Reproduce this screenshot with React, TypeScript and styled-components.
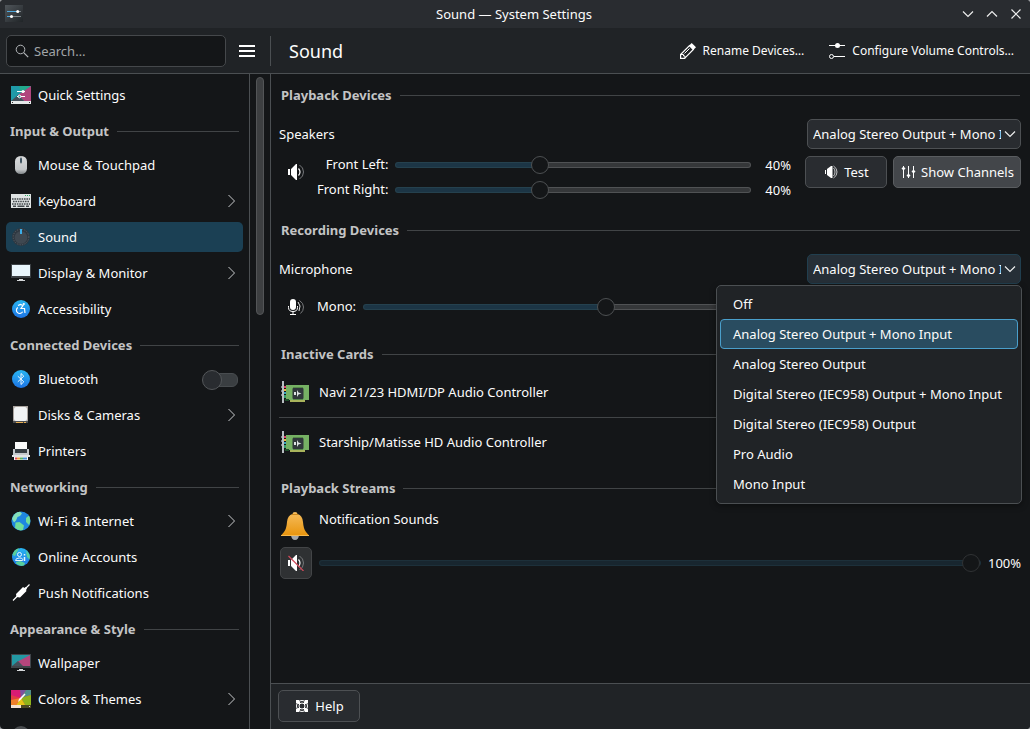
import React, { ReactNode, useState } from "react";
import styled, { createGlobalStyle, css } from "styled-components";

const c = {
  view: "#141618",
  panel: "#202326",
  title: "#292c30",
  button: "#292c30",
  line: "#414446",
  edge: "#4b4f52",
  text: "#fcfcfc",
  muted: "#c3c4c5",
};

const GlobalStyle = createGlobalStyle`
  * { box-sizing: border-box; }
  body { margin: 0; background: #9a9da0; }
  body, button, input, select {
    font-family: "Noto Sans", sans-serif;
    font-size: 13px;
    line-height: 18px;
    color: ${c.text};
  }
  svg { display: block; flex: none; }
  ul { list-style: none; margin: 0; padding: 0; }
`;

const Window = styled.div`
  display: flex;
  flex-direction: column;
  height: 100vh;
  overflow: hidden;
  border-radius: 4px;
  background: ${c.view};
`;

/* Title bar */
const TitleBar = styled.header`
  display: grid;
  grid-template-columns: 1fr auto 1fr;
  align-items: center;
  flex: none;
  height: 28px;
  padding: 0 6px 0 4px;
  background: ${c.title};
`;
const WindowTitle = styled.span``;
const WindowButtons = styled.div`
  display: flex;
  justify-content: flex-end;
  gap: 8px;
`;
const BareButton = styled.button`
  display: flex;
  align-items: center;
  justify-content: center;
  gap: 7px;
  padding: 0;
  border: 0;
  background: none;
  font-size: 12px;
  white-space: nowrap;
`;

/* Toolbar */
const ToolBar = styled.div`
  display: flex;
  align-items: center;
  flex: none;
  height: 46px;
  background: ${c.panel};
  border-bottom: 1px solid ${c.edge};
`;
const ToolBarSide = styled.div`
  display: flex;
  align-items: center;
  gap: 13px;
  flex: none;
  width: 270px;
  padding-left: 6px;
`;
const SearchBox = styled.label`
  display: flex;
  align-items: center;
  gap: 4px;
  width: 220px;
  height: 32px;
  padding: 0 7px;
  border: 1px solid #45484b;
  border-radius: 5px;
  background: ${c.view};
`;
const SearchInput = styled.input`
  flex: 1;
  min-width: 0;
  padding: 0;
  border: 0;
  outline: 0;
  background: none;
  &::placeholder { color: #a1a5a8; opacity: 1; }
`;
const ToolBarMain = styled.div`
  display: flex;
  align-items: center;
  gap: 25px;
  flex: 1;
  height: 30px;
  padding: 0 16px 0 18px;
  border-left: 1px solid ${c.edge};
`;
const PageTitle = styled.h1`
  flex: 1;
  margin: 0;
  font-size: 18px;
  line-height: 24px;
  font-weight: 400;
`;

/* Sidebar */
const Body = styled.div`
  display: flex;
  flex: 1;
  min-height: 0;
`;
const SideBar = styled.nav`
  flex: none;
  width: 250px;
  padding-top: 3px;
  overflow: hidden;
  border-right: 1px solid ${c.edge};
`;
const ScrollGutter = styled.div`
  flex: none;
  width: 20px;
  padding: 3px 6px;
`;
const ScrollThumb = styled.div`
  width: 8px;
  height: 238px;
  border: 1px solid #535557;
  border-radius: 4px;
  background: #3d3f41;
`;
const Heading = styled.h2<{ $side?: boolean }>`
  display: flex;
  align-items: center;
  gap: 8px;
  height: ${(p) => (p.$side ? 34 : 30)}px;
  margin: 0;
  padding: ${(p) => (p.$side ? "2px 10px 0" : "0 1px 0 2px")};
  font-size: 13px;
  line-height: 18px;
  font-weight: 700;
  color: ${c.muted};
  white-space: nowrap;
  &::after {
    content: "";
    flex: 1;
    height: 1px;
    background: ${c.line};
  }
`;
const SideRow = styled.li<{ $selected?: boolean }>`
  display: flex;
  align-items: center;
  height: 30px;
  margin: 3px 6px;
  padding: 0 5px;
  border-radius: 5px;
  ${(p) => p.$selected && css`background: #1b4054;`}
`;
const SideList = styled.ul`
  display: flow-root;
  ${SideRow} + ${SideRow} { margin-top: 6px; }
`;
const SideLink = styled.a`
  display: flex;
  align-items: center;
  gap: 7px;
  flex: 1;
  color: inherit;
  text-decoration: none;
`;
const Switch = styled.input`
  appearance: none;
  display: grid;
  align-items: center;
  width: 36px;
  height: 18px;
  margin: 0;
  &::before,
  &::after {
    content: "";
    grid-area: 1 / 1;
    border: 1px solid #54575a;
  }
  &::before {
    height: 12px;
    margin-left: 2px;
    border-color: #484c4f;
    border-radius: 6px;
    background: #3a3e41;
  }
  &::after {
    width: 18px;
    height: 18px;
    border-radius: 50%;
    background: #292c30;
  }
`;

/* Main page */
const Main = styled.main`
  display: flex;
  flex-direction: column;
  flex: 1;
  min-width: 0;
  border-left: 1px solid ${c.edge};
`;
const Page = styled.div`
  display: flex;
  flex-direction: column;
  gap: 7px;
  flex: 1;
  padding: 6px 9px 0 8px;
`;
const Section = styled.section``;
const DeviceHead = styled.div`
  display: flex;
  align-items: center;
  justify-content: space-between;
  margin-top: 9px;
`;
const DeviceName = styled.span``;
const DeviceBody = styled.div`
  display: flex;
  align-items: flex-start;
  padding: 7px 0 9px 1px;
`;
const IconCell = styled.span`
  display: flex;
  align-items: center;
  justify-content: center;
  flex: none;
  width: 32px;
  height: 32px;
`;
const Channels = styled.div`
  display: grid;
  grid-template-columns: auto 1fr 33px;
  align-items: center;
  align-content: center;
  gap: 7px;
  flex: 1;
  min-height: 32px;
  padding-left: 5px;
`;
const ChannelLabel = styled.label`
  padding-bottom: 2px;
  line-height: 16px;
  text-align: right;
  white-space: nowrap;
`;
const Percent = styled.output`
  width: 33px;
  text-align: right;
`;
const DeviceActions = styled.div`
  display: flex;
  gap: 6px;
  margin-left: 14px;
`;
const Button = styled.button<{ $pressed?: boolean; $width: number }>`
  display: flex;
  align-items: center;
  justify-content: center;
  gap: 5px;
  width: ${(p) => p.$width}px;
  height: 32px;
  padding: 0;
  border: 1px solid ${(p) => (p.$pressed ? "#5a5d60" : "#4d5053")};
  border-radius: 5px;
  background: ${(p) => (p.$pressed ? "#43464a" : c.button)};
  white-space: nowrap;
`;
const MuteButton = styled(Button)`
  flex: none;
  border-color: #434547;
  background: #2f3133;
`;
const Range = styled.input.attrs({ type: "range" })<{ $muted?: boolean }>`
  --fill: ${(p) => (p.$muted ? "#18262f" : "#1c3545")};
  --fill-edge: ${(p) => (p.$muted ? "#1d303a" : "#25414e")};
  appearance: none;
  flex: 1;
  width: 100%;
  min-width: 0;
  height: 18px;
  margin: 0;
  background: none;
  &::-webkit-slider-runnable-track {
    height: 6px;
    border: 1px solid transparent;
    border-radius: 3px;
    background:
      linear-gradient(to right, var(--fill) var(--at), #353739 var(--at)) padding-box,
      linear-gradient(to right, var(--fill-edge) var(--at), #505254 var(--at)) border-box;
  }
  &::-webkit-slider-thumb {
    appearance: none;
    width: 18px;
    height: 18px;
    margin-top: -7px;
    border: 1px solid ${(p) => (p.$muted ? "#303234" : "#4d5052")};
    border-radius: 50%;
    background: ${c.view};
  }
`;

/* Drop-down */
const ComboBox = styled.div`
  position: relative;
  width: 214px;
`;
const Select = styled.select<{ $open?: boolean }>`
  display: block;
  appearance: none;
  width: 100%;
  height: 30px;
  padding: 0 19px 0 5px;
  border: 1px solid ${(p) => (p.$open ? "#213f4f" : "#4d5053")};
  border-radius: 5px;
  outline: 0;
  background: ${(p) => (p.$open ? "#262f37" : c.button)};
  text-overflow: clip;
`;
const ComboArrow = styled.span`
  position: absolute;
  top: 7px;
  right: 3px;
  pointer-events: none;
`;
const Popup = styled.ul`
  position: absolute;
  z-index: 1;
  top: 31px;
  right: -1px;
  width: 306px;
  padding: 3px 3px 4px;
  border: 1px solid ${c.edge};
  border-radius: 5px;
  background: ${c.panel};
  box-shadow: 0 2px 6px rgba(0, 0, 0, 0.4);
`;
const PopupItem = styled.li<{ $selected?: boolean }>`
  height: 30px;
  padding: 5px 12px;
  border: 1px solid ${(p) => (p.$selected ? "#4a9fcb" : "transparent")};
  border-radius: 4px;
  background: ${(p) => (p.$selected ? "#294c60" : "none")};
  white-space: nowrap;
`;

/* Cards and streams */
const CardRow = styled.li`
  display: flex;
  align-items: center;
  gap: 8px;
  height: 48px;
  padding-bottom: 2px;
  & + & {
    height: 49px;
    padding-bottom: 0;
    border-top: 1px solid ${c.line};
  }
`;
const StreamHead = styled.div`
  display: flex;
  gap: 10px;
  padding: 9px 0 7px 2px;
  line-height: 14px;
`;
const StreamRow = styled.div`
  display: flex;
  align-items: center;
  gap: 7px;
  padding-left: 1px;
`;
const Footer = styled.footer`
  flex: none;
  padding: 6px 7px 7px;
  border-top: 1px solid ${c.edge};
  background: ${c.panel};
`;

/* Icons */
const Svg = ({ w = 16, h = w, children }: { w?: number; h?: number; children: ReactNode }) => (
  <svg width={w} height={h} viewBox={`0 0 ${w} ${h}`} fill="none" aria-hidden="true">{children}</svg>
);
const Chevron = ({ d, dim }: { d: string; dim?: boolean }) => (
  <Svg><path d={d} stroke={dim ? "#c8cacc" : "#eceded"} strokeWidth={dim ? 1 : 1.2} /></Svg>
);
const downPath = "M3 5.5l5 5 5-5";
const rightPath = "M6.5 2l6 6-6 6";

const AppIcon = () => (
  <Svg w={20}>
    <defs><linearGradient id="app" x2="1" y2="1"><stop stopColor="#50565b" /><stop offset="1" stopColor="#202427" /></linearGradient></defs>
    <rect x="1" y="1" width="18" height="17" fill="url(#app)" />
    <path d="M3 7.5h11M3 12.5h5" stroke="#4fa8dc" />
    <path d="M14 7.5h3M8 12.5h9" stroke="#7b8287" />
    <circle cx="13.7" cy="7.5" r="1.5" fill="#fff" /><circle cx="7.5" cy="12.5" r="1.5" fill="#fff" />
  </Svg>
);
const SearchIcon = () => (
  <Svg><circle cx="6.5" cy="6.5" r="4.3" stroke="#b4b7ba" /><path d="M9.700 9.700l4.500 4.500" stroke="#b4b7ba" strokeWidth="1.2" /></Svg>
);
const MenuIcon = () => <Svg><path d="M0 3h16M0 8h16M0 13h16" stroke="#fff" strokeWidth="2" /></Svg>;
const PencilIcon = () => (
  <Svg>
    <path d="M.6 11.500L9.500 2.600l3.900 3.900-8.900 8.900H.6z" stroke="#fff" strokeWidth="1.200" />
    <path d="M9 2.700L11.700 0 16 4.300 13.300 7z" fill="#fff" />
    <path d="M1 11.500h2.500V13H5v2.400M4.500 10.500l5-5" stroke="#fff" />
  </Svg>
);
const ConfigureIcon = () => (
  <Svg>
    <path d="M0 2.5h16M5 13.5h11" stroke="#fff" />
    <circle cx="8.5" cy="2.5" r="2.5" fill="#fff" /><circle cx="2.5" cy="13.5" r="2" stroke="#fff" />
  </Svg>
);
const SpeakerShape = () => (
  <>
    <path d="M0 5h2v6H0zM3 5L8 0h1v16H8l-5-5z" fill="#fff" />
    <path d="M10.5 4.5q3 3.500 0 7" stroke="#fff" strokeWidth="1.2" />
    <path d="M11.500 1q4 2.500 4 7t-4 7" stroke="#77797b" />
  </>
);
const SpeakerIcon = () => <Svg><SpeakerShape /></Svg>;
const MutedIcon = () => <Svg><SpeakerShape /><path d="M.5 1l15 15" stroke="#d04a5a" strokeWidth="1.2" /></Svg>;
const TestIcon = () => (
  <Svg>
    <path d="M2.500 6v4" stroke="#fff" /><path d="M4 5l4-3h1.500v12H8l-4-3z" fill="#fff" />
    <path d="M10.500 4q1.500 1.500 1.500 4t-1.500 4M10.500 2q3.500 2 3.500 6t-3.500 6" stroke="#d4d5d6" strokeWidth=".9" />
  </Svg>
);
const MixerIcon = () => (
  <Svg>
    <path d="M3.500 2v12M8.500 2v12M13.500 2v12" stroke="#fff" />
    <path d="M3.500 2.500l2 2-2 2-2-2zM8.500 9.500l2 2-2 2-2-2zM13.500 5.500l2 2-2 2-2-2z" fill="#fff" />
  </Svg>
);
const MicIcon = () => (
  <Svg>
    <rect x="2" y="0" width="6" height="11" rx="3" fill="#fff" />
    <path d="M.5 7v1.500q0 4 4.500 4t4.500-4V7M5 12.500V15M2 15.500h6" stroke="#fff" />
    <path d="M10 3q3.500 3.500 1 9" stroke="#e6e6e6" /><path d="M11.500 1.500q4 2.500 4 6.500t-3 6.500" stroke="#77797b" />
  </Svg>
);
const HelpIcon = () => (
  <Svg>
    <circle cx="8" cy="8" r="5.500" stroke="#fff" /><circle cx="8" cy="8" r="3" stroke="#fff" />
    <path d="M2 2h3l1.500 3.500L5.500 6.500 2 5zM14 2h-3L9.500 5.500l1 1L14 5zM2 14h3l1.500-3.500-1-1L2 11zM14 14h-3l-1.500-3.500 1-1L14 11z" fill="#fff" />
  </Svg>
);
const CardIcon = () => (
  <Svg w={28} h={24}>
    <path d="M5 5h23v15h-4v2H9v-2H5z" fill="#76b164" /><path d="M9 20h15v2H9z" fill="#a9b45c" />
    <path d="M12 7h10v13H12z" fill="#568a4a" />
    <rect x="11.500" y="8" width="11" height="11" rx="1" fill="#30373b" />
    <path d="M13 12h2v3h-2zM16 10l1.500 2.500 3 1-3 1-1.500 2.500z" fill="#dfe3e5" />
    <path d="M3 6h2v2H3z" fill="#d8416a" /><path d="M3 9h2v2H3z" fill="#e8b53d" /><path d="M3 12h2v2H3z" fill="#3aa4c0" /><path d="M3 15h2v3H3z" fill="#37a06b" />
    <path d="M1 1h2v22H1z" fill="#b9bfc3" /><path d="M0 6h1v2H0zM0 10h1v2H0zM0 14h1v2H0z" fill="#7d8387" />
    <path d="M4 19h4v2H4z" fill="#1f4d2a" />
  </Svg>
);
const BellIcon = () => (
  <Svg w={28}>
    <defs><linearGradient id="bell" x2="0" y2="1"><stop stopColor="#f6bd5e" /><stop offset="1" stopColor="#e8940c" /></linearGradient></defs>
    <path d="M10 23h8q-.5 5-4 5t-4-5z" fill="#a3a6a9" />
    <path d="M11.500 2q0-2 2.500-2t2.500 2q5 1.500 5.500 8 .5 7 3 10l3 3.500V24H0v-.5L3 20q2.500-3 3-10 .5-6.500 5.500-8z" fill="url(#bell)" />
    <path d="M11 2.500h6" stroke="#c9851a" /><path d="M0 23.500h28" stroke="#f7b94e" />
  </Svg>
);

const Blue = ({ children }: { children: ReactNode }) => (
  <Svg w={20}>
    <defs><linearGradient id="blue" x2="0" y2="1"><stop stopColor="#29b6f2" /><stop offset="1" stopColor="#1d74e4" /></linearGradient></defs>
    <circle cx="10" cy="10" r="9" fill="url(#blue)" />{children}
  </Svg>
);
const QuickIcon = () => (
  <Svg w={20}>
    <path d="M0 1h20v15H0z" fill="#1f9aa8" /><path d="M8 1h12L10 9z" fill="#23a98d" />
    <path d="M20 1v15h-7L7 10z" fill="#b0467d" /><path d="M0 16l7-6 6 6z" fill="#45505a" />
    <path d="M0 16h20v3H0z" fill="#e6e9ea" /><path d="M1 17h1v1H1zM18 17h1v1h-1z" fill="#333" />
    <path d="M6 6.500h8M6 11.500h8" stroke="#fff" /><circle cx="12" cy="6.500" r="1.500" fill="#fff" /><circle cx="8.500" cy="11.500" r="1.300" fill="#23a0a0" stroke="#fff" />
  </Svg>
);
const MouseIcon = () => (
  <Svg w={20}>
    <defs><linearGradient id="mouse" x2="0" y2="1"><stop stopColor="#d9dbdc" /><stop offset=".75" stopColor="#c3c6c8" /><stop offset="1" stopColor="#7f8487" /></linearGradient></defs>
    <rect x="4" y="1" width="12" height="18" rx="5.500" fill="url(#mouse)" />
    <path d="M10 1v8" stroke="#8e9396" /><rect x="9" y="3" width="2" height="5" rx="1" fill="#3e5361" />
  </Svg>
);
const KeyboardIcon = () => (
  <Svg w={20}>
    <path d="M0 3h20v14H0z" fill="#dfe3e3" />
    <path d="M1 8h18M2 10.500h16M1 13h18" stroke="#43494c" strokeWidth="1.600" strokeDasharray="1.600 .8" />
    <path d="M2 15.300h3M6.500 15.300h7M15 15.300h3" stroke="#43494c" strokeWidth="1.400" />
    <path d="M14 4.500h1M16 4.500h1M18 4.500h1" stroke="#35a866" />
  </Svg>
);
const KnobIcon = () => (
  <Svg w={20}>
    <circle cx="10" cy="10" r="9" fill="#2f3841" /><circle cx="10" cy="10" r="7.800" stroke="#59636c" strokeWidth="1" strokeDasharray="1 1.500" />
    <circle cx="10" cy="10.500" r="6.300" fill="#3f4851" /><path d="M9 2h2v5H9z" fill="#3daee9" />
  </Svg>
);
const MonitorIcon = () => (
  <Svg w={20}>
    <path d="M0 1h20v14H0z" fill="#3c4145" /><path d="M1 2h18v11H1z" fill="#e9f6fc" />
    <path d="M8 16h4v2H8zM6 17h8v1H6z" fill="#d5d8da" />
  </Svg>
);
const AccessIcon = () => (
  <Blue><g stroke="#fff" strokeWidth="1.200"><path d="M7 6.500l2.500-1 2.500 1-2 3h3.500l.5 4.500" /><path d="M6.800 8.500a3.300 3.300 0 1 0 4.800 4.300" /></g><circle cx="12.800" cy="5" r="1.100" fill="#fff" /></Blue>
);
const BluetoothIcon = () => (
  <Blue><path d="M6.800 7.200l6 5.600-2.800 2.700v-11l2.800 2.700-6 5.600" stroke="#fff" strokeWidth=".9" /></Blue>
);
const DiskIcon = () => (
  <Svg w={20}>
    <path d="M2 1h15v17H2z" fill="#aaa49f" /><rect x="3" y="2" width="13" height="14" rx="2" fill="#f1f3f4" />
    <path d="M2 16h15v2H2z" fill="#4b4d4f" /><path d="M5 17.500h7M13 17.500h2" stroke="#e6ad51" />
  </Svg>
);
const PrinterIcon = () => (
  <Svg w={20}>
    <path d="M2 8h16v7H2z" fill="#c4c9cd" /><path d="M4 1h12v8H4z" fill="#fafafa" />
    <path d="M4 8h12v4H4z" fill="#353d43" /><path d="M1 14h18v2H1z" fill="#e1e4e6" />
    <path d="M3 16h14v3H3z" fill="#fafafa" />
    <path d="M4 16.500h2v2H4z" fill="#e0475b" /><path d="M6 16.500h3v2H6z" fill="#eaa13f" /><path d="M9 16.500h3v2H9z" fill="#58b368" /><path d="M12 16.500h4v2h-4z" fill="#4a90d9" />
  </Svg>
);
const GlobeIcon = () => (
  <Blue>
    <circle cx="10" cy="10" r="9.600" fill="#1f86df" />
    <path d="M1 8Q3 1 9 .7l2 1.800L9 5 6.500 6 5 9.500l-2 2z" fill="#84e0b8" />
    <path d="M4.500 11.500l4-.5 4.500 3.500-1 4.500q-4 1.500-8-2z" fill="#6fdc9b" />
    <path d="M15 7l3-2.500Q20.500 10 18 14l-3-3z" fill="#6fdc9b" />
  </Blue>
);
const AccountsIcon = () => (
  <Blue>
    <path d="M1.500 8Q3 2 8 1.300L6 5l-2 4zM5 15l4-1 5 2-1 2.500q-4 1.500-8-2z" fill="#58cf9b" /><path d="M15 3.500q5 4 3.500 9L16 10z" fill="#58cf9b" />
    <circle cx="8.500" cy="7.500" r="2" stroke="#e4f6ff" /><path d="M4.500 13.500q0-2.500 4-2.500t3 2.500z" stroke="#e4f6ff" /><path d="M13.500 7v1.500M13.500 10v4" stroke="#e4f6ff" strokeWidth="1.500" />
  </Blue>
);
const PlugIcon = () => (
  <Svg w={20}><path d="M2 17.500l5-5M14 6l4.500-4.500" stroke="#fff" strokeWidth="1.200" /><path d="M5 11l7-7 1.500 1 1-1 1.500 1.500-1 1.500.5 1-6.500 6.500L5.500 14z" fill="#fff" /></Svg>
);
const WallpaperIcon = () => (
  <Svg w={20}>
    <path d="M0 1h20v14H0z" fill="#40454a" /><path d="M1 2h18v11H1z" fill="#2398a3" /><path d="M19 2v11h-8L6 9z" fill="#b5457c" />
    <path d="M1 13l6-5 5 5z" fill="#45505a" /><path d="M8 16h4v2H8zM6 17h8v1H6z" fill="#d5d8da" />
  </Svg>
);
const ColorsIcon = () => (
  <Svg w={20}>
    <path d="M0 1h20v15H0z" fill="#e23b46" /><path d="M0 1h9l1 8L0 6z" fill="#d81b74" /><path d="M9 1h6l-5 8z" fill="#7b52a0" />
    <path d="M15 1h5v5l-10 3z" fill="#4f8f8c" /><path d="M20 6v10h-6l-4-7z" fill="#8fb31c" /><path d="M14 16H5l5-7z" fill="#e4c416" /><path d="M5 16H0v-5l10-2z" fill="#f0802a" />
    <path d="M0 16h10v3H0z" fill="#f6e4d4" /><path d="M10 16h10v3H10z" fill="#4c4a22" /><path d="M1 17h1v1H1zM18 17h1v1h-1z" fill="#ddd" />
    <path d="M7 13l1-3 5.500-5.500 1 1L9.500 11z" fill="#fff" />
  </Svg>
);
const FontsIcon = () => <Svg w={20}><circle cx="10" cy="10" r="9" fill="#4a4d50" /></Svg>;

type Item = { label: string; icon: ReactNode; more?: boolean; toggle?: boolean; selected?: boolean; iconOnly?: boolean };
const groups: { title?: string; items: Item[] }[] = [
  { items: [{ label: "Quick Settings", icon: <QuickIcon /> }] },
  {
    title: "Input & Output",
    items: [
      { label: "Mouse & Touchpad", icon: <MouseIcon /> },
      { label: "Keyboard", icon: <KeyboardIcon />, more: true },
      { label: "Sound", icon: <KnobIcon />, selected: true },
      { label: "Display & Monitor", icon: <MonitorIcon />, more: true },
      { label: "Accessibility", icon: <AccessIcon /> },
    ],
  },
  {
    title: "Connected Devices",
    items: [
      { label: "Bluetooth", icon: <BluetoothIcon />, toggle: true },
      { label: "Disks & Cameras", icon: <DiskIcon />, more: true },
      { label: "Printers", icon: <PrinterIcon /> },
    ],
  },
  {
    title: "Networking",
    items: [
      { label: "Wi-Fi & Internet", icon: <GlobeIcon />, more: true },
      { label: "Online Accounts", icon: <AccountsIcon /> },
      { label: "Push Notifications", icon: <PlugIcon /> },
    ],
  },
  {
    title: "Appearance & Style",
    items: [
      { label: "Wallpaper", icon: <WallpaperIcon /> },
      { label: "Colors & Themes", icon: <ColorsIcon />, more: true },
      { label: "Fonts", icon: <FontsIcon />, iconOnly: true },
    ],
  },
];

const profiles = [
  "Off",
  "Analog Stereo Output + Mono Input",
  "Analog Stereo Output",
  "Digital Stereo (IEC958) Output + Mono Input",
  "Digital Stereo (IEC958) Output",
  "Pro Audio",
  "Mono Input",
];

function ProfileSelect({ label, open }: { label: string; open?: boolean }) {
  const [value, setValue] = useState(profiles[1]);
  return (
    <ComboBox>
      <Select aria-label={label} $open={open} value={value} onChange={(e) => setValue(e.target.value)}>
        {profiles.map((p) => <option key={p}>{p}</option>)}
      </Select>
      <ComboArrow><Chevron d={downPath} /></ComboArrow>
      {open && (
        <Popup role="listbox" aria-label={label}>
          {profiles.map((p) => (
            <PopupItem key={p} role="option" aria-selected={p === value} $selected={p === value} onClick={() => setValue(p)}>{p}</PopupItem>
          ))}
        </Popup>
      )}
    </ComboBox>
  );
}

function Volume({ id, initial, label, muted }: { id: string; initial: number; label?: string; muted?: boolean }) {
  const [value, setValue] = useState(initial);
  return (
    <>
      {label && <ChannelLabel htmlFor={id}>{label}</ChannelLabel>}
      <Range
        id={id}
        aria-label={label ? undefined : "Volume"}
        min={0}
        max={100}
        value={value}
        $muted={muted}
        onChange={(e) => setValue(Number(e.target.value))}
        style={{ "--at": `${value}%` } as React.CSSProperties}
      />
      <Percent htmlFor={id}>{value}%</Percent>
    </>
  );
}

export default function App() {
  return (
    <>
      <GlobalStyle />
      <Window>
        <TitleBar>
          <AppIcon />
          <WindowTitle>Sound — System Settings</WindowTitle>
          <WindowButtons>
            <BareButton aria-label="Minimize"><Chevron d={downPath} /></BareButton>
            <BareButton aria-label="Maximize"><Chevron d="M3 10.500l5-5 5 5" /></BareButton>
            <BareButton aria-label="Close"><Chevron d="M3.500 3.500l9 9M12.500 3.500l-9 9" /></BareButton>
          </WindowButtons>
        </TitleBar>
        <ToolBar>
          <ToolBarSide>
            <SearchBox>
              <SearchIcon />
              <SearchInput type="text" placeholder="Search…" aria-label="Search" />
            </SearchBox>
            <BareButton aria-label="Menu"><MenuIcon /></BareButton>
          </ToolBarSide>
          <ToolBarMain>
            <PageTitle>Sound</PageTitle>
            <BareButton><PencilIcon />Rename Devices…</BareButton>
            <BareButton><ConfigureIcon />Configure Volume Controls…</BareButton>
          </ToolBarMain>
        </ToolBar>
        <Body>
          <SideBar>
            {groups.map((g, i) => (
              <React.Fragment key={i}>
                {g.title && <Heading $side>{g.title}</Heading>}
                <SideList>
                  {g.items.map((it) => (
                    <SideRow key={it.label} $selected={it.selected}>
                      <SideLink href="#" aria-label={it.label}>{it.icon}{!it.iconOnly && it.label}</SideLink>
                      {it.more && <Chevron d={rightPath} dim />}
                      {it.toggle && <Switch type="checkbox" role="switch" aria-label={it.label} />}
                    </SideRow>
                  ))}
                </SideList>
              </React.Fragment>
            ))}
          </SideBar>
          <ScrollGutter><ScrollThumb /></ScrollGutter>
          <Main>
            <Page>
              <Section>
                <Heading>Playback Devices</Heading>
                <DeviceHead>
                  <DeviceName>Speakers</DeviceName>
                  <ProfileSelect label="Speakers profile" />
                </DeviceHead>
                <DeviceBody>
                  <IconCell><SpeakerIcon /></IconCell>
                  <Channels>
                    <Volume id="front-left" label="Front Left:" initial={40} />
                    <Volume id="front-right" label="Front Right:" initial={40} />
                  </Channels>
                  <DeviceActions>
                    <Button $width={82}><TestIcon />Test</Button>
                    <Button $width={128} $pressed><MixerIcon />Show Channels</Button>
                  </DeviceActions>
                </DeviceBody>
              </Section>
              <Section>
                <Heading>Recording Devices</Heading>
                <DeviceHead>
                  <DeviceName>Microphone</DeviceName>
                  <ProfileSelect label="Microphone profile" open />
                </DeviceHead>
                <DeviceBody>
                  <IconCell><MicIcon /></IconCell>
                  <Channels>
                    <Volume id="mono" label="Mono:" initial={39} />
                  </Channels>
                </DeviceBody>
              </Section>
              <Section>
                <Heading>Inactive Cards</Heading>
                <ul>
                  <CardRow><IconCell><CardIcon /></IconCell>Navi 21/23 HDMI/DP Audio Controller</CardRow>
                  <CardRow><IconCell><CardIcon /></IconCell>Starship/Matisse HD Audio Controller</CardRow>
                </ul>
              </Section>
              <Section>
                <Heading>Playback Streams</Heading>
                <StreamHead><BellIcon />Notification Sounds</StreamHead>
                <StreamRow>
                  <MuteButton $width={32} aria-label="Unmute"><MutedIcon /></MuteButton>
                  <Volume id="notifications" initial={100} muted />
                </StreamRow>
              </Section>
            </Page>
            <Footer>
              <Button $width={82}><HelpIcon />Help</Button>
            </Footer>
          </Main>
        </Body>
      </Window>
    </>
  );
}
